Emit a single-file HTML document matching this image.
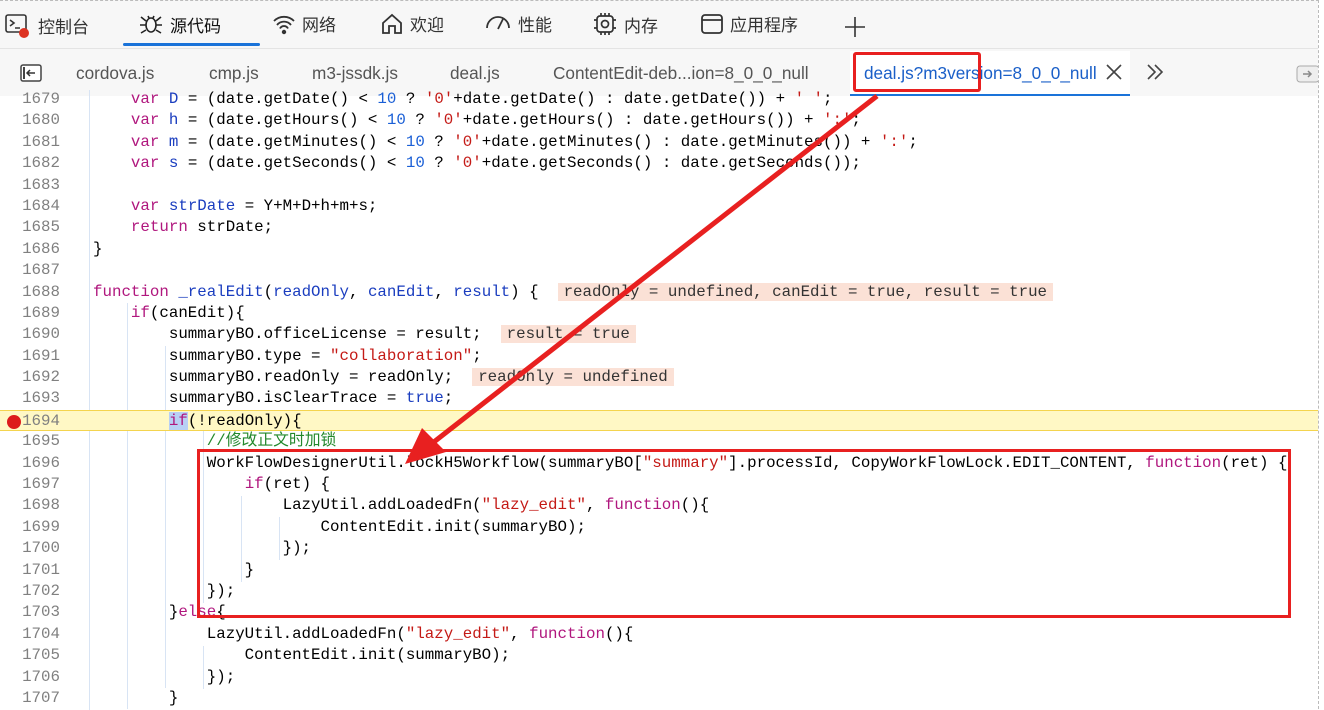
<!DOCTYPE html>
<html><head><meta charset="utf-8"><style>
*{margin:0;padding:0;box-sizing:border-box}
body{width:1324px;height:709px;overflow:hidden;background:#fff;position:relative;font-family:"Liberation Sans","Noto Sans CJK SC",sans-serif}
.top{position:absolute;left:0;top:0;width:1324px;height:48px;background:#f7f7f7;border-top:1px dashed #bbb}
.tab{position:absolute;top:10px;font-size:17px;color:#333;display:flex;align-items:center;gap:6px}
.tabs2{position:absolute;left:0;top:48px;width:1324px;height:48px;background:#f7f7f7;border-top:1px solid #e4e4e4}
.ft{position:absolute;top:63px;font-size:17.2px;color:#555}
.code{position:absolute;left:0;top:89px;width:1324px;font-family:"Liberation Mono","Noto Sans CJK SC",monospace;font-size:15.8px}
.ln{height:21.4px;line-height:21.4px;white-space:pre;position:relative}
.n{display:inline-block;width:60px;text-align:right;color:#808080;margin-right:33px}
.k{color:#b0177e}.v{color:#1a3dbf}.num{color:#1a5fd6}.s{color:#c41a16}.c{color:#23882c}
.hint{background:#fbe1d6;color:#333;padding:0 6px}
.hl{background:#fff8c5;border-top:1px solid #f4d44e;border-bottom:1px solid #f4d44e}
.g{position:absolute;border-left:1px solid #d8e4f4}
</style></head><body>
<div class="top">
<div class="tab" style="left:4px"><svg width="28" height="28" viewBox="0 0 28 28"><rect x="2" y="4" width="20" height="17" rx="2" fill="none" stroke="#333" stroke-width="1.6"/><path d="M6 9l4 3-4 3M11 17h5" stroke="#333" stroke-width="1.6" fill="none"/><circle cx="20" cy="22" r="5" fill="#d32"/></svg>控制台</div>
<div class="tab" style="left:138px"><svg width="26" height="26" viewBox="0 0 26 26" fill="none" stroke="#222" stroke-width="1.6"><ellipse cx="13" cy="14" rx="5" ry="7"/><path d="M3 6l5 4M23 6l-5 4M2 14h6M24 14h-6M3 22l5-3M23 22l-5-3M10 5l1 2M16 5l-1 2"/></svg><span style="color:#111">源代码</span></div>
<div style="position:absolute;left:123px;top:42px;width:137px;height:3px;background:#1a73d9;border-radius:2px"></div>
<div class="tab" style="left:272px"><svg width="24" height="24" viewBox="0 0 24 24" fill="none" stroke="#333" stroke-width="1.8"><path d="M2 9a14 14 0 0 1 20 0M5 13a9 9 0 0 1 14 0M8 16.5a4.5 4.5 0 0 1 8 0"/><circle cx="12" cy="20" r="1.3" fill="#333"/></svg>网络</div>
<div class="tab" style="left:380px"><svg width="24" height="24" viewBox="0 0 24 24" fill="none" stroke="#333" stroke-width="1.8"><path d="M3 11l9-8 9 8v10h-6v-7h-6v7H3z"/></svg>欢迎</div>
<div class="tab" style="left:484px"><svg width="28" height="24" viewBox="0 0 28 24" fill="none" stroke="#333" stroke-width="1.8"><path d="M3 16a11 11 0 0 1 22 0M14 17l5-10"/></svg>性能</div>
<div class="tab" style="left:592px"><svg width="26" height="26" viewBox="0 0 26 26" fill="none" stroke="#333" stroke-width="1.7"><rect x="5" y="5" width="16" height="16" rx="3"/><circle cx="13" cy="13" r="3.5"/><path d="M9 2v3M13 2v3M17 2v3M9 21v3M13 21v3M17 21v3M2 9h3M2 17h3M21 9h3M21 17h3"/></svg>内存</div>
<div class="tab" style="left:700px"><svg width="24" height="24" viewBox="0 0 24 24" fill="none" stroke="#333" stroke-width="1.8"><rect x="2" y="3" width="20" height="18" rx="3"/><path d="M2 8h20"/></svg>应用程序</div>
<svg style="position:absolute;left:843px;top:14px" width="24" height="24" viewBox="0 0 24 24"><path d="M12 2v20M2 12h20" stroke="#333" stroke-width="1.6"/></svg>
</div>
<div class="tabs2">
<svg style="position:absolute;left:20px;top:15px" width="22" height="18" viewBox="0 0 22 18"><rect x="1" y="1" width="20" height="16" rx="2" fill="#fff" stroke="#444" stroke-width="1.5"/><path d="M15 9H7M10 6L7 9l3 3" stroke="#333" stroke-width="1.5" fill="none"/><path d="M4 3v12" stroke="#444" stroke-width="2"/></svg>
<div style="position:absolute;left:850px;top:2px;width:280px;height:46px;background:#fff"></div>
<div style="position:absolute;left:850px;top:45px;width:280px;height:2px;background:#1a73d9"></div>
<svg style="position:absolute;left:1296px;top:16px" width="24" height="18" viewBox="0 0 24 18"><rect x="1" y="1" width="22" height="16" rx="3" fill="#eee" stroke="#aaa"/><path d="M7 9h8M12 6l3 3-3 3" stroke="#888" stroke-width="1.5" fill="none"/></svg>
</div>
<div class="ft" style="left:76px">cordova.js</div>
<div class="ft" style="left:209px">cmp.js</div>
<div class="ft" style="left:312px">m3-jssdk.js</div>
<div class="ft" style="left:450px">deal.js</div>
<div class="ft" style="left:553px">ContentEdit-deb...ion=8_0_0_null</div>
<div class="ft" style="left:864px;color:#1a5fc8">deal.js?m3version=8_0_0_null</div>
<svg style="position:absolute;left:1105px;top:63px" width="18" height="18" viewBox="0 0 18 18"><path d="M2 2l14 14M16 2L2 16" stroke="#444" stroke-width="1.6"/></svg>
<svg style="position:absolute;left:1145px;top:62px" width="20" height="20" viewBox="0 0 20 20"><path d="M3 3l7 7-7 7M10 3l7 7-7 7" stroke="#444" stroke-width="1.6" fill="none"/></svg>
<div style="position:absolute;left:853px;top:52px;width:128px;height:40px;border:3px solid #e82020;border-radius:3px"></div>

<div class="g" style="left:89px;top:90px;height:620px"></div>
<div class="g" style="left:127px;top:303px;height:406px"></div>
<div class="g" style="left:165px;top:346px;height:342px"></div>
<div class="g" style="left:203px;top:431px;height:172px"></div>
<div class="g" style="left:241px;top:496px;height:86px"></div>
<div class="g" style="left:279px;top:517px;height:43px"></div>
<div class="g" style="left:203px;top:646px;height:43px"></div>

<div class="code">
<div class="ln"><span class="n">1679</span>    <span class="k">var</span> <span class="v">D</span> = (date.getDate() &lt; <span class="num">10</span> ? <span class="s">'0'</span>+date.getDate() : date.getDate()) + <span class="s">' '</span>;</div>
<div class="ln"><span class="n">1680</span>    <span class="k">var</span> <span class="v">h</span> = (date.getHours() &lt; <span class="num">10</span> ? <span class="s">'0'</span>+date.getHours() : date.getHours()) + <span class="s">':'</span>;</div>
<div class="ln"><span class="n">1681</span>    <span class="k">var</span> <span class="v">m</span> = (date.getMinutes() &lt; <span class="num">10</span> ? <span class="s">'0'</span>+date.getMinutes() : date.getMinutes()) + <span class="s">':'</span>;</div>
<div class="ln"><span class="n">1682</span>    <span class="k">var</span> <span class="v">s</span> = (date.getSeconds() &lt; <span class="num">10</span> ? <span class="s">'0'</span>+date.getSeconds() : date.getSeconds());</div>
<div class="ln"><span class="n">1683</span></div>
<div class="ln"><span class="n">1684</span>    <span class="k">var</span> <span class="v">strDate</span> = Y+M+D+h+m+s;</div>
<div class="ln"><span class="n">1685</span>    <span class="k">return</span> strDate;</div>
<div class="ln"><span class="n">1686</span>}</div>
<div class="ln"><span class="n">1687</span></div>
<div class="ln"><span class="n">1688</span><span class="k">function</span> <span class="v">_realEdit</span>(<span class="v">readOnly</span>, <span class="v">canEdit</span>, <span class="v">result</span>) {  <span class="hint">readOnly = undefined, canEdit = true, result = true</span></div>
<div class="ln"><span class="n">1689</span>    <span class="k">if</span>(canEdit){</div>
<div class="ln"><span class="n">1690</span>        summaryBO.officeLicense = result;  <span class="hint">result = true</span></div>
<div class="ln"><span class="n">1691</span>        summaryBO.type = <span class="s">"collaboration"</span>;</div>
<div class="ln"><span class="n">1692</span>        summaryBO.readOnly = readOnly;  <span class="hint">readOnly = undefined</span></div>
<div class="ln"><span class="n">1693</span>        summaryBO.isClearTrace = <span class="v">true</span>;</div>
<div class="ln hl"><span style="position:absolute;left:7px;top:4px;width:14px;height:14px;border-radius:50%;background:#dd1b1b"></span><span class="n">1694</span>        <span class="k" style="background:#b8d0f5">if</span>(!readOnly){</div>
<div class="ln"><span class="n">1695</span>            <span class="c">//修改正文时加锁</span></div>
<div class="ln"><span class="n">1696</span>            WorkFlowDesignerUtil.lockH5Workflow(summaryBO[<span class="s">"summary"</span>].processId, CopyWorkFlowLock.EDIT_CONTENT, <span class="k">function</span>(ret) {</div>
<div class="ln"><span class="n">1697</span>                <span class="k">if</span>(ret) {</div>
<div class="ln"><span class="n">1698</span>                    LazyUtil.addLoadedFn(<span class="s">"lazy_edit"</span>, <span class="k">function</span>(){</div>
<div class="ln"><span class="n">1699</span>                        ContentEdit.init(summaryBO);</div>
<div class="ln"><span class="n">1700</span>                    });</div>
<div class="ln"><span class="n">1701</span>                }</div>
<div class="ln"><span class="n">1702</span>            });</div>
<div class="ln"><span class="n">1703</span>        }<span class="k">else</span>{</div>
<div class="ln"><span class="n">1704</span>            LazyUtil.addLoadedFn(<span class="s">"lazy_edit"</span>, <span class="k">function</span>(){</div>
<div class="ln"><span class="n">1705</span>                ContentEdit.init(summaryBO);</div>
<div class="ln"><span class="n">1706</span>            });</div>
<div class="ln"><span class="n">1707</span>        }</div>
</div>
<div style="position:absolute;left:1318px;top:0;width:6px;height:709px;background:#fff;border-left:1px dashed #bbb"></div>
<div style="position:absolute;left:197px;top:449px;width:1094px;height:169px;border:3px solid #e82020"></div>
<svg style="position:absolute;left:0;top:0" width="1324" height="709"><line x1="877" y1="96" x2="430" y2="445" stroke="#e82020" stroke-width="5"/><polygon points="405,464 422,428 446,452" fill="#e82020"/></svg>
</body></html>
